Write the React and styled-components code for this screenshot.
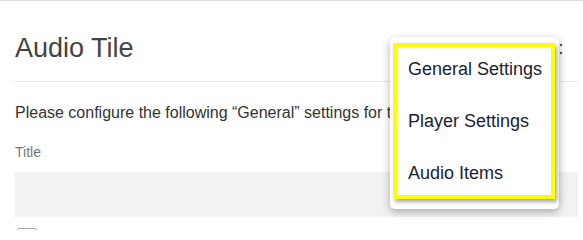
import React from 'react'
import styled, { createGlobalStyle } from 'styled-components'

const GlobalStyle = createGlobalStyle`
  html, body {
    margin: 0;
    padding: 0;
    background: #fff;
    font-family: Arial, "Liberation Sans", Helvetica, sans-serif;
  }
`;

// page
const Page = styled.div`
  position: relative;
  width: 583px;
  height: 230px;
  overflow: hidden;
  border-top: 1px solid #dcdcdc;
  box-sizing: border-box;
`;
const Panel = styled.div`
  padding: 0 5px 0 15px;
`;

// header
const Header = styled.div`
  display: flex;
  justify-content: space-between;
  align-items: flex-start;
  padding: 31px 0 17px 0;
  border-bottom: 1px solid #e6e6e6;
`;
const Title = styled.h1`
  margin: 0;
  font-size: 27px;
  line-height: 1.2;
  font-weight: normal;
  color: #444;
`;
const KebabButton = styled.button`
  display: flex;
  margin: 11px 15px 0 0;
  padding: 0;
  border: 0;
  background: transparent;
`;

// body
const Intro = styled.p`
  margin: 21px 0 0 0;
  font-size: 16px;
  line-height: 1.2;
  color: #333;
  white-space: nowrap;
`;
const Label = styled.label`
  display: block;
  margin-top: 21px;
  font-size: 14px;
  line-height: 1.2;
  color: #777;
`;
const Input = styled.div`
  margin-top: 12px;
  height: 45px;
  background: #f2f2f2;
`;
const Check = styled.div`
  margin: 11px 0 0 2px;
  width: 18px;
  height: 14px;
  border: 1px solid #aaa;
  border-radius: 2px;
`;

// menu
const Menu = styled.div`
  position: absolute;
  top: 36px;
  left: 390px;
  width: 169px;
  padding: 6px 4px 10px 3px;
  box-sizing: border-box;
  background: #fff;
  border-radius: 5px;
  box-shadow: 0 3px 8px rgba(0, 0, 0, 0.3);
`;
const MenuList = styled.ul`
  margin: 0;
  padding: 0;
  list-style: none;
  outline: 4px solid #ffff00;
  outline-offset: -4px;
  box-shadow: inset 3px 3px 3px rgba(0, 0, 0, 0.35), 2px 3px 4px rgba(0, 0, 0, 0.35);
`;
const MenuItem = styled.li`
  display: flex;
  align-items: center;
  height: 52px;
  padding-left: 15px;
  font-size: 18px;
  color: #1b2233;
  white-space: nowrap;
`;

const Kebab = () => (
  <svg width="4" height="12" viewBox="0 0 4 12">
    <circle cx="2" cy="2" r="1.2" fill="#555" />
    <circle cx="2" cy="10" r="1.2" fill="#555" />
  </svg>
);

const items = ['General Settings', 'Player Settings', 'Audio Items'];

const App = () => {
  return (
    <Page>
      <GlobalStyle />
      <Panel>
        <Header>
          <Title>Audio Tile</Title>
          <KebabButton>
            <Kebab />
          </KebabButton>
        </Header>
        <Intro>Please configure the following “General” settings for this tile.</Intro>
        <Label>Title</Label>
        <Input />
        <Check />
      </Panel>
      <Menu>
        <MenuList>
          {items.map((el, i) => {
            return <MenuItem key={i}>{el}</MenuItem>
          })}
        </MenuList>
      </Menu>
    </Page>
  )
}

export default App
